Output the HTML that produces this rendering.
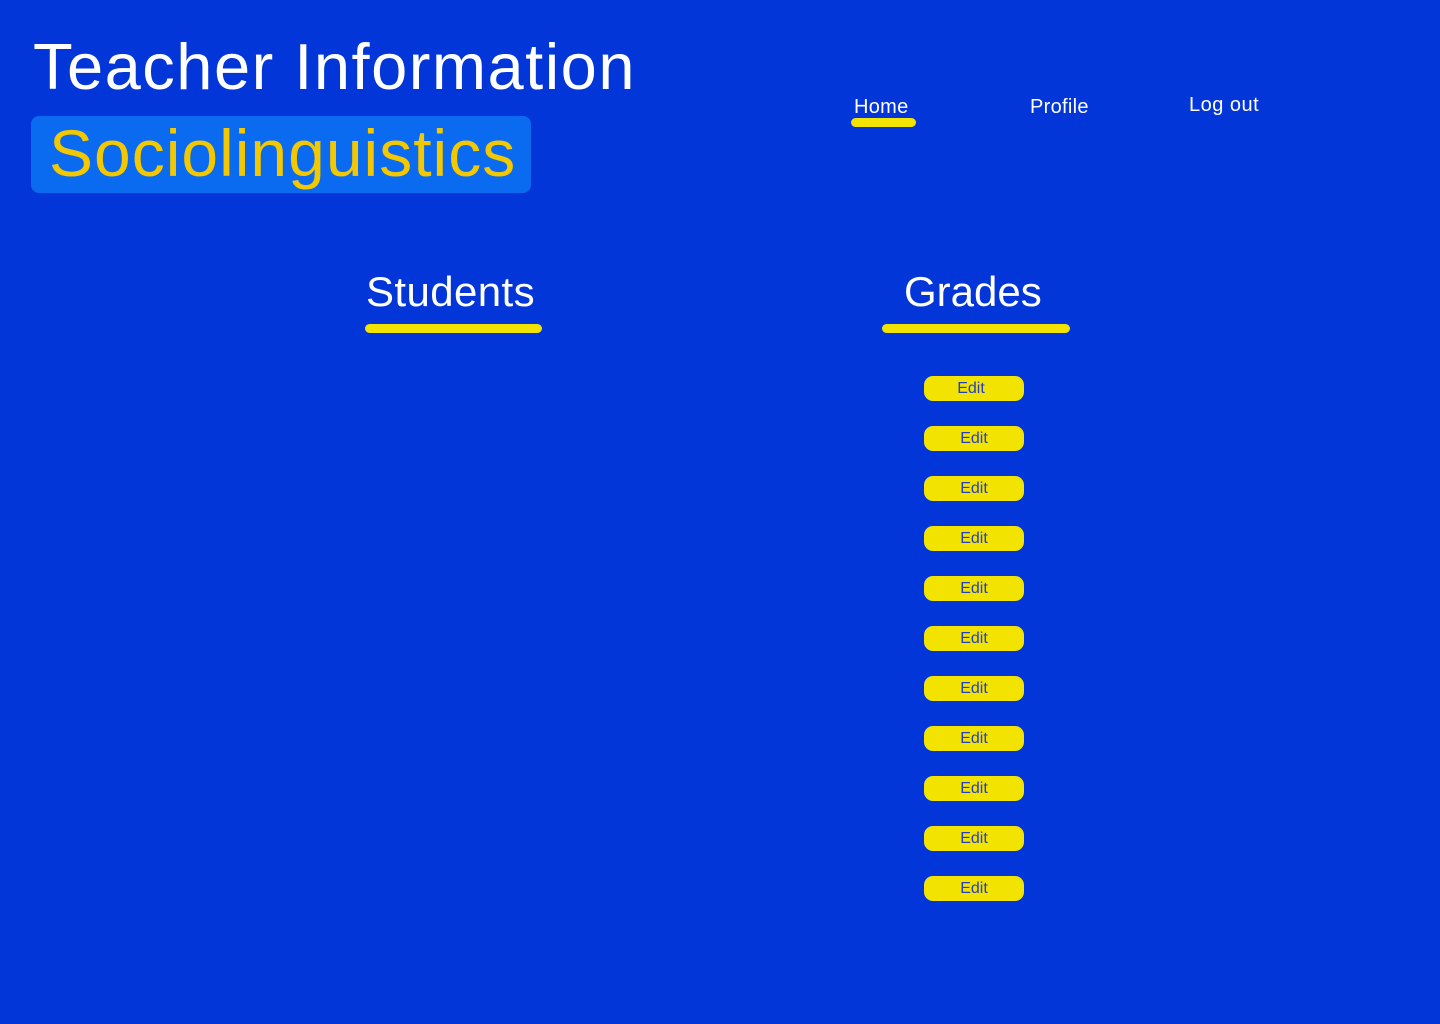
<!DOCTYPE html>
<html><head><style>
body{margin:0;width:1440px;height:1024px;background:#0336d9;font-family:"Liberation Sans",sans-serif;position:relative;overflow:hidden;color:#fff}
.a{position:absolute;white-space:nowrap;line-height:1}
.bar{position:absolute;background:#f2e400;border-radius:5px}
.btn{position:absolute;left:924px;width:100px;height:25px;background:#f2e400;border-radius:9px;color:#2340c0;font-size:16px;line-height:26px;text-align:center}
</style></head><body>
<div class="a" style="left:33px;top:34px;font-size:65px;letter-spacing:1.5px">Teacher Information</div>
<div style="position:absolute;left:31px;top:116px;width:500px;height:77px;background:#0a6bf0;border-radius:8px"></div>
<div class="a" style="left:49px;top:120px;font-size:66px;color:#f3c800;letter-spacing:1px">Sociolinguistics</div>
<div class="a" style="left:854px;top:97px;font-size:20px;letter-spacing:0.3px">Home</div>
<div class="bar" style="left:851px;top:118px;width:65px;height:9px"></div>
<div class="a" style="left:1030px;top:97px;font-size:20px;letter-spacing:0.3px">Profile</div>
<div class="a" style="left:1189px;top:95px;font-size:20px;letter-spacing:0.5px">Log out</div>
<div class="a" style="left:366px;top:271px;font-size:42px;letter-spacing:0.4px">Students</div>
<div class="bar" style="left:365px;top:324px;width:177px;height:9px"></div>
<div class="a" style="left:904px;top:271px;font-size:42px">Grades</div>
<div class="bar" style="left:882px;top:324px;width:188px;height:9px"></div>
<div class="btn" style="top:376px;text-indent:-6px">Edit</div>
<div class="btn" style="top:426px">Edit</div>
<div class="btn" style="top:476px">Edit</div>
<div class="btn" style="top:526px">Edit</div>
<div class="btn" style="top:576px">Edit</div>
<div class="btn" style="top:626px">Edit</div>
<div class="btn" style="top:676px">Edit</div>
<div class="btn" style="top:726px">Edit</div>
<div class="btn" style="top:776px">Edit</div>
<div class="btn" style="top:826px">Edit</div>
<div class="btn" style="top:876px">Edit</div>
</body></html>
